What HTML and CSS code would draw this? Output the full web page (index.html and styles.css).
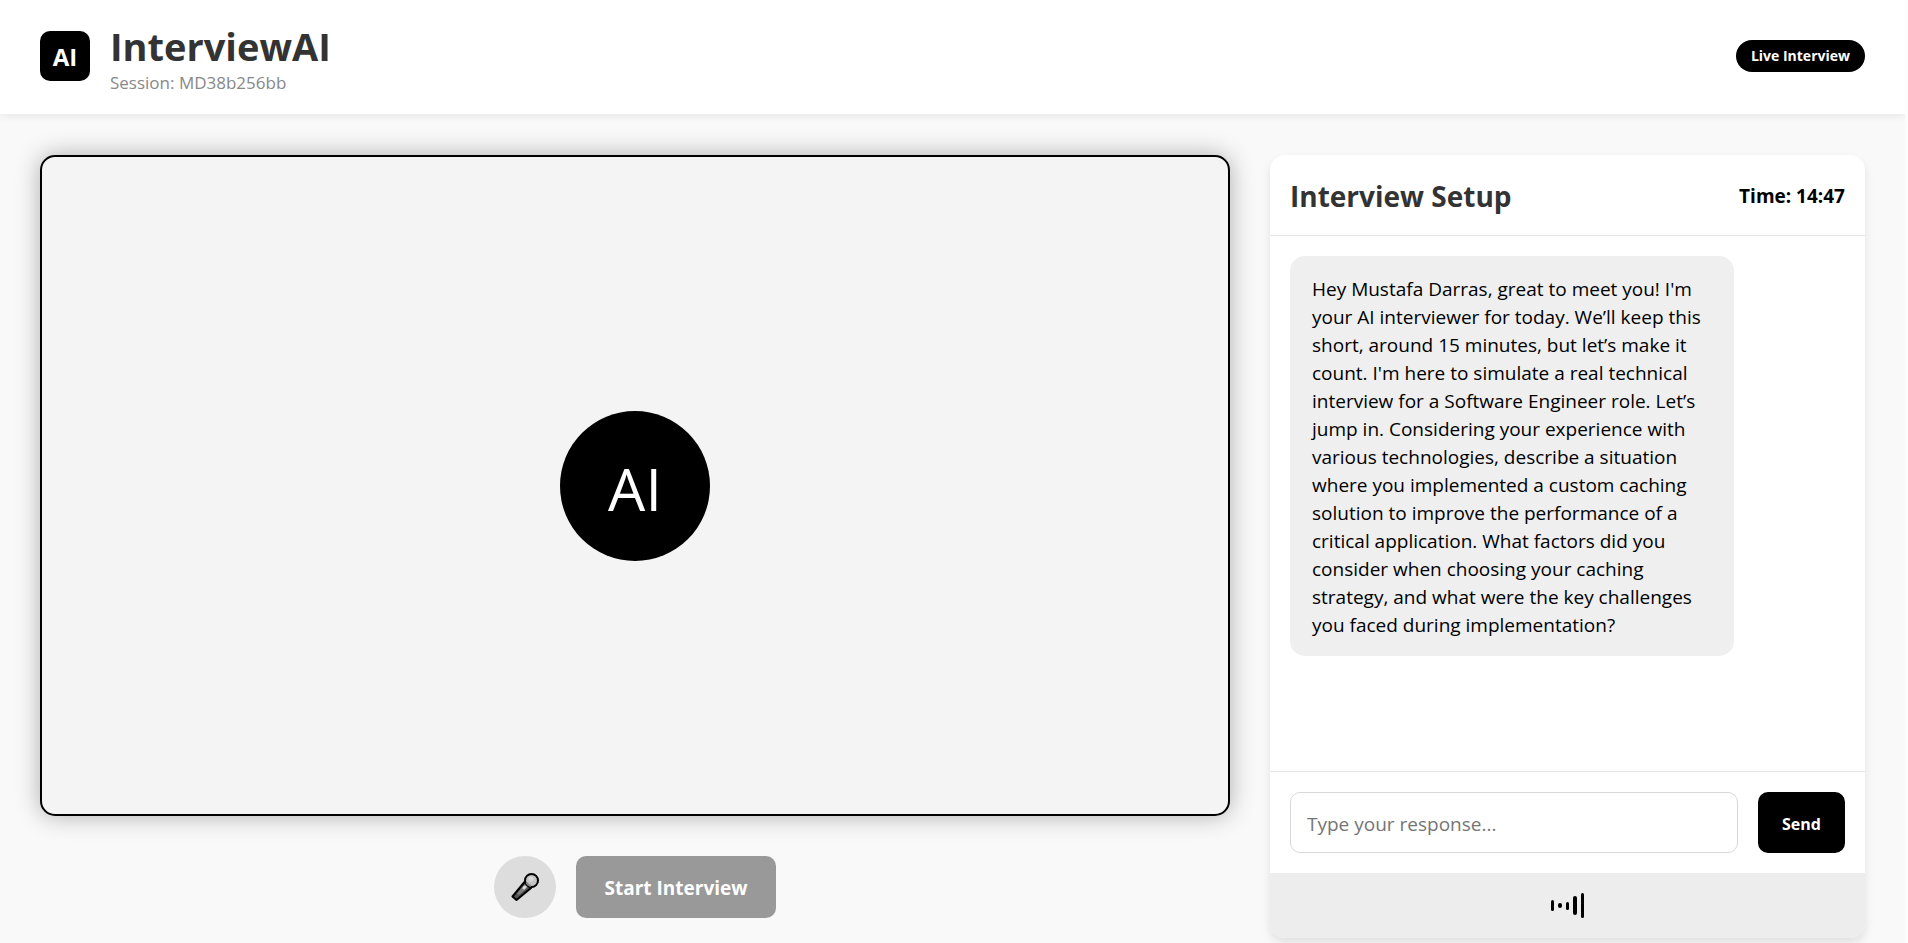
FILE: index.html
```html
<!DOCTYPE html>
<html lang="en">
<head>
    <meta charset="UTF-8">
    <meta name="viewport" content="width=device-width, initial-scale=1.0">
    <title>InterviewAI</title>
    <link rel="stylesheet" href="styles.css">
</head>
<body>

    <header class="header">
        <div class="logo">
            <div class="logo-icon">AI</div>
            <div class="logo-text">
                <h1>InterviewAI</h1>
                <p class="session">Session: MD38b256bb</p>
            </div>
        </div>
        <div class="status-badge">Live Interview</div>
    </header>

    <main class="main">
        <section class="video-section">
            <div class="video-box">
                <div class="avatar">AI</div>
            </div>
            <div class="controls">
                <button class="mic-btn" type="button" aria-label="Microphone">
                    <svg width="28" height="28" viewBox="0 0 28 28">
                        <path d="M13.500 9 L1.500 23.500 L5.500 27 L20 15 Z" fill="#555" stroke="#000" stroke-width="2" stroke-linejoin="round"/>
                        <path d="M14 11 L6 20.500 L8 22 L17 13.500 Z" fill="#808080"/>
                        <circle cx="20.500" cy="7.500" r="6.500" fill="#c4c4c4" stroke="#000" stroke-width="2"/>
                        <path d="M15.500 9.500 Q17 12.500 20 13" fill="none" stroke="#888" stroke-width="2"/>
                        <circle cx="20" cy="6" r="2.500" fill="#d9d9d9"/>
                        <path d="M13 15 L14 14" stroke="#ddd" stroke-width="3" stroke-linecap="round"/>
                    </svg>
                </button>
                <button class="start-btn" type="button" disabled>Start Interview</button>
            </div>
        </section>

        <section class="chat-section">
            <div class="chat-header">
                <h2>Interview Setup</h2>
                <div class="timer">Time: 14:47</div>
            </div>
            <div class="chat-messages">
                <div class="message">Hey Mustafa Darras, great to meet you! I'm your AI interviewer for today. We’ll keep this short, around 15 minutes, but let’s make it count. I'm here to simulate a real technical interview for a Software Engineer role. Let’s jump in. Considering your experience with various technologies, describe a situation where you implemented a custom caching solution to improve the performance of a critical application. What factors did you consider when choosing your caching strategy, and what were the key challenges you faced during implementation?</div>
            </div>
            <form class="chat-input">
                <input type="text" placeholder="Type your response..." aria-label="Your response">
                <button class="send-btn" type="button">Send</button>
            </form>
            <div class="audio-bar">
                <span class="bar bar-md"></span>
                <span class="bar bar-dot"></span>
                <span class="bar bar-sm"></span>
                <span class="bar bar-lg"></span>
                <span class="bar bar-xl"></span>
            </div>
        </section>
    </main>

</body>
</html>
```

FILE: styles.css
```css
* {
    margin: 0;
    padding: 0;
    box-sizing: border-box;
}

html {
    background: #fcfcfc;
    padding-right: 3px;
}

body {
    background: #f9f9f9;
    font-family: 'Segoe UI', 'Open Sans', sans-serif;
    color: #000;
    min-height: 100vh;
}

button, input {
    font-family: inherit;
}

/* Header */
.header {
    display: flex;
    justify-content: space-between;
    align-items: center;
    background: #fff;
    padding: 19px 40px 21px;
    box-shadow: 0 2px 8px rgba(0, 0, 0, 0.08);
}

.logo {
    display: flex;
    align-items: center;
    gap: 20px;
}

.logo-icon {
    width: 50px;
    height: 50px;
    background: #000;
    color: #fff;
    border-radius: 10px;
    display: flex;
    align-items: center;
    justify-content: center;
    font-size: 24px;
    font-weight: 700;
}

.logo-text h1 {
    font-size: 38px;
    line-height: 54px;
    color: #333;
}

.session {
    font-size: 17px;
    line-height: 20px;
    color: #888;
}

.status-badge {
    background: #000;
    color: #fff;
    font-size: 14px;
    line-height: 20px;
    font-weight: 700;
    padding: 6px 15px;
    border-radius: 20px;
}

/* Layout */
.main {
    display: grid;
    grid-template-columns: 2fr 1fr;
    gap: 40px;
    padding: 41px 40px 40px;
}

.video-section, .chat-section {
    height: calc(100vh - 160px);
    min-width: 0;
    display: flex;
    flex-direction: column;
}

.video-box {
    flex: 1;
    background: #f4f4f4;
    border: 2px solid #000;
    border-radius: 15px;
    box-shadow: 0 0 25px rgba(0, 0, 0, 0.3);
    display: flex;
    align-items: center;
    justify-content: center;
}

.avatar {
    width: 150px;
    height: 150px;
    padding-top: 4px;
    border-radius: 50%;
    background: #000;
    color: #fff;
    font-size: 59px;
    display: flex;
    align-items: center;
    justify-content: center;
}

.controls {
    display: flex;
    justify-content: center;
    gap: 20px;
    padding: 40px 0 20px;
}

.mic-btn {
    width: 62px;
    height: 62px;
    border: none;
    border-radius: 50%;
    background: #ddd;
    display: flex;
    align-items: center;
    justify-content: center;
    cursor: pointer;
}

.start-btn {
    width: 200px;
    height: 62px;
    padding-top: 2px;
    border: none;
    border-radius: 10px;
    background: #999;
    color: #fff;
    font-size: 19px;
    font-weight: 700;
}

/* Chat */
.chat-section {
    background: #fff;
    border-radius: 15px;
    box-shadow: 0 5px 10px rgba(0, 0, 0, 0.1);
    overflow: hidden;
}

.chat-header {
    display: flex;
    justify-content: space-between;
    align-items: center;
    padding: 21px 20px 19px;
    border-bottom: 1px solid #e6e6e6;
}

.chat-header h2 {
    font-size: 28px;
    line-height: 40px;
    color: #333;
}

.timer {
    font-size: 19px;
    font-weight: 700;
}

.chat-messages {
    flex: 1;
    padding: 20px;
    overflow: hidden;
}

.message {
    width: 80%;
    background: #efefef;
    border-radius: 15px;
    padding: 19px 22px 17px;
    font-size: 19px;
    line-height: 28px;
}

.chat-input {
    display: flex;
    gap: 20px;
    padding: 20px;
    border-top: 1px solid #e6e6e6;
}

.chat-input input {
    flex: 1;
    min-width: 0;
    height: 61px;
    padding: 2px 16px 0;
    border: 1px solid #d8d8d8;
    border-radius: 10px;
    font-size: 19px;
    outline: none;
}

.send-btn {
    width: 87px;
    padding-top: 2px;
    border: none;
    border-radius: 10px;
    background: #000;
    color: #fff;
    font-size: 16px;
    font-weight: 700;
    cursor: pointer;
}

.audio-bar {
    height: 65px;
    background: #ededed;
    display: flex;
    align-items: center;
    justify-content: center;
    gap: 4px;
}

.bar {
    width: 3px;
    border-radius: 2px;
    background: #000;
}

.bar-dot { width: 4px; height: 5px; }
.bar-sm { height: 8px; }
.bar-md { height: 11px; }
.bar-lg { width: 4px; height: 19px; }
.bar-xl { height: 25px; }
```
